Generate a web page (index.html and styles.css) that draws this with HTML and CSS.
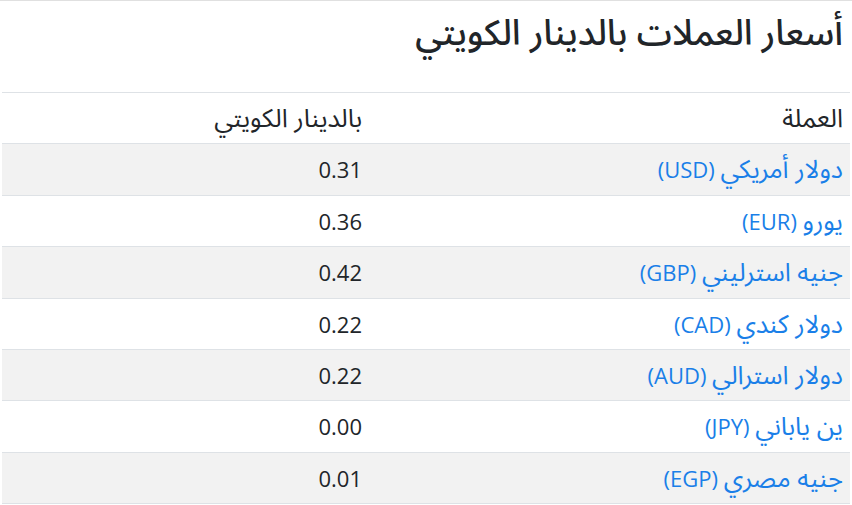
FILE: index.html
```html
<!DOCTYPE html>
<html lang="ar" dir="rtl">
<head>
<meta charset="utf-8">
<link rel="stylesheet" href="styles.css">
</head>
<body>
<div class="panel">
  <h2 class="title">أسعار العملات بالدينار الكويتي</h2>
  <table class="rates">
    <thead>
      <tr><th class="c1"><span class="ar">العملة</span></th><th class="c2"><span class="ar">بالدينار الكويتي</span></th></tr>
    </thead>
    <tbody>
      <tr><td><a href="#"><span class="ar">دولار أمريكي</span> (USD)</a></td><td>0.31</td></tr>
      <tr><td><a href="#"><span class="ar">يورو</span> (EUR)</a></td><td>0.36</td></tr>
      <tr><td><a href="#"><span class="ar">جنيه استرليني</span> (GBP)</a></td><td>0.42</td></tr>
      <tr><td><a href="#"><span class="ar">دولار كندي</span> (CAD)</a></td><td>0.22</td></tr>
      <tr><td><a href="#"><span class="ar">دولار استرالي</span> (AUD)</a></td><td>0.22</td></tr>
      <tr><td><a href="#"><span class="ar">ين ياباني</span> (JPY)</a></td><td>0.00</td></tr>
      <tr><td><a href="#"><span class="ar">جنيه مصري</span> (EGP)</a></td><td>0.01</td></tr>
    </tbody>
  </table>
</div>
</body>
</html>
```
FILE: styles.css
```css
html, body {
  margin: 0;
  padding: 0;
  background: #fff;
}
body {
  font-family: "Open Sans", "Noto Sans Arabic", "DejaVu Sans", sans-serif;
  color: #212529;
  font-size: 22px;
}
.panel {
  border-top: 1px solid #e0e0e0;
  padding: 0 2px 0 2px;
}
.title {
  margin: 0;
  height: 91px;
  box-sizing: border-box;
  padding: 9px 7px 0 0;
  font-size: 35.5px;
  font-weight: 500;
  line-height: 1.2;
}
.rates {
  width: 100%;
  border-collapse: collapse;
}
.rates th, .rates td {
  text-align: right;
  font-weight: 400;
  padding: 8px 7px;
  line-height: 34.4px;
  border-top: 1px solid #dee2e6;
}
.ar {
  font-size: 25.5px;
  line-height: 1;
}
.rates tbody tr:nth-child(odd) {
  background: #f2f2f2;
}
.rates tbody tr:last-child td {
  border-bottom: 1px solid #dee2e6;
}
.c1 { width: 467px; }
.rates a {
  color: #1a7fe8;
  text-decoration: none;
}
```
